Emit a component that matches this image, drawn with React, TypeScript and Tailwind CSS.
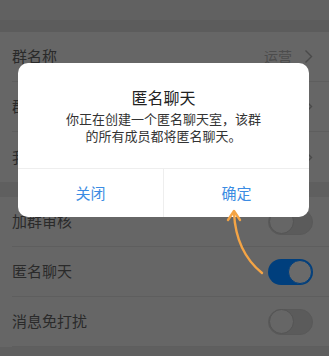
import React from "react";

// Group settings page dimmed behind an "anonymous chat" confirm dialog.

const FONT = { fontFamily: '"Noto Sans CJK SC", "Noto Sans", sans-serif' };

function Chevron() {
  return (
    <svg width="9" height="15" viewBox="0 0 9 15" fill="none" aria-hidden="true">
      <path d="M1.5 1.5L7.5 7.5L1.5 13.5" stroke="#4a4a4a" strokeWidth="1.4" />
    </svg>
  );
}

function Toggle({ on }: { on?: boolean }) {
  if (on) {
    return (
      <div className="w-[45px] h-[26px] rounded-full bg-[#003f7d] flex items-center justify-end p-px">
        <div className="w-[24px] h-[24px] rounded-full bg-[#6a6a6a] border border-[#003f7d]" />
      </div>
    );
  }
  return (
    <div className="w-[45px] h-[26px] rounded-full bg-[#5b5b5b] border border-[#595959] flex items-center">
      <div className="w-[25px] h-[25px] rounded-full bg-[#666666] border border-[#545454]" />
    </div>
  );
}

function Row({ label, right, last }: { label: string; right?: React.ReactNode; last?: boolean }) {
  return (
    <div className="h-[50px] bg-[#666666] pl-3 flex">
      <div
        className={`flex-1 flex items-center justify-between pr-4 ${last ? "" : "border-b border-[#5e5e5e]"}`}
      >
        <span className="text-[15px] text-[#2a2a2a]">{label}</span>
        {right}
      </div>
    </div>
  );
}

export default function App() {
  return (
    <div className="relative w-[329px] h-[356px] overflow-hidden bg-[#5f5f5f]" style={FONT}>
      <div className="h-5 bg-[#616161]" />
      <div className="h-3 bg-[#5c5c5c]" />

      <Row
        label="群名称"
        right={
          <div className="flex items-center gap-3">
            <span className="text-[14px] text-[#4c4c4c]">运营</span>
            <Chevron />
          </div>
        }
      />
      <Row label="群二维码" right={<Chevron />} />
      <Row label="我在本群的昵称" right={<Chevron />} last />

      <div className="h-[15px] bg-[#5f5f5f]" />

      <Row label="加群审核" right={<Toggle />} />
      <Row label="匿名聊天" right={<Toggle on />} />
      <Row label="消息免打扰" right={<Toggle />} />

      {/* dialog */}
      <div className="absolute left-[18px] top-[63px] w-[291px] h-[154px] bg-white rounded-[10px] flex flex-col">
        <div className="flex-1 flex flex-col items-center pt-[22px]">
          <div className="text-[16px] leading-[24px] text-[#222]">匿名聊天</div>
          <div className="mt-px text-[13px] leading-[17px] text-[#333] text-center">
            <div>你正在创建一个匿名聊天室，该群</div>
            <div>的所有成员都将匿名聊天。</div>
          </div>
        </div>
        <div className="h-[49px] border-t border-[#eeeeee] flex">
          <button className="flex-1 text-[15px] text-[#3b8ce3] border-r border-[#eeeeee]">关闭</button>
          <button className="flex-1 text-[15px] text-[#3b8ce3]">确定</button>
        </div>
      </div>

      {/* hint arrow */}
      <svg className="absolute left-0 top-0" width="329" height="356" fill="none" aria-hidden="true">
        <path d="M262 273 Q236 252 234 213" stroke="#f4a445" strokeWidth="2.4" strokeLinecap="round" />
        <path d="M228 220 L234 211 L240 220" stroke="#f4a445" strokeWidth="2.4" strokeLinecap="round" strokeLinejoin="round" />
      </svg>
    </div>
  );
}
